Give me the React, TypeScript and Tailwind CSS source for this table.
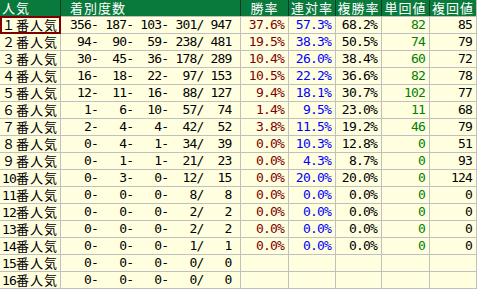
const rows: [number, number, number, number, number, string, string, string, string, string][] = [
  [356, 187, 103, 301, 947, "37.6%", "57.3%", "68.2%", "82", "85"],
  [94, 90, 59, 238, 481, "19.5%", "38.3%", "50.5%", "74", "79"],
  [30, 45, 36, 178, 289, "10.4%", "26.0%", "38.4%", "60", "72"],
  [16, 18, 22, 97, 153, "10.5%", "22.2%", "36.6%", "82", "78"],
  [12, 11, 16, 88, 127, "9.4%", "18.1%", "30.7%", "102", "77"],
  [1, 6, 10, 57, 74, "1.4%", "9.5%", "23.0%", "11", "68"],
  [2, 4, 4, 42, 52, "3.8%", "11.5%", "19.2%", "46", "79"],
  [0, 4, 1, 34, 39, "0.0%", "10.3%", "12.8%", "0", "51"],
  [0, 1, 1, 21, 23, "0.0%", "4.3%", "8.7%", "0", "93"],
  [0, 3, 0, 12, 15, "0.0%", "20.0%", "20.0%", "0", "124"],
  [0, 0, 0, 8, 8, "0.0%", "0.0%", "0.0%", "0", "0"],
  [0, 0, 0, 2, 2, "0.0%", "0.0%", "0.0%", "0", "0"],
  [0, 0, 0, 2, 2, "0.0%", "0.0%", "0.0%", "0", "0"],
  [0, 0, 0, 1, 1, "0.0%", "0.0%", "0.0%", "0", "0"],
  [0, 0, 0, 0, 0, "", "", "", "", ""],
  [0, 0, 0, 0, 0, "", "", "", "", ""],
];

const fullDigits = "０１２３４５６７８９";

const pad = (n: number) => String(n).padStart(3, " ");

const cols = "grid grid-cols-[60px_179px_47px_46px_45px_47px_46px] gap-x-px";
const jp = "font-['Noto_Sans_CJK_JP',sans-serif] text-[13px] tracking-[1px] leading-4 whitespace-nowrap";
const mono =
  "font-['DejaVu_Sans_Mono',monospace] text-[13px] tracking-[-0.8px] leading-4 whitespace-pre";

// 1〜9 are full-width digits, 10 and up half-width, as in the source sheet
const Rank = ({ n }: { n: number }) =>
  n < 10 ? (
    <>{`${fullDigits[n]}番人気`}</>
  ) : (
    <>
      <span className={mono}>{n}</span>番人気
    </>
  );

const App = () => {
  return (
    <div className="w-[478px] h-[289px] bg-white overflow-hidden">
      <div className="w-[477px] flex flex-col gap-y-px bg-[#c0c0c0] pr-px pb-px">
        <div className={`${cols} bg-[#0c3b1f] h-4 ${jp} text-white`}>
          <div className="bg-[#0a7a3c] pl-0.5">人気</div>
          <div className="bg-[#0a7a3c] pl-[9px]">着別度数</div>
          <div className="bg-[#0a7a3c] text-center">勝率</div>
          <div className="bg-[#0a7a3c] text-center">連対率</div>
          <div className="bg-[#0a7a3c] text-center">複勝率</div>
          <div className="bg-[#0a7a3c] text-center">単回値</div>
          <div className="bg-[#0a7a3c] text-center">複回値</div>
        </div>
        <div className={`${cols} gap-y-px auto-rows-[16px]`}>
          {rows.map((r, i) => (
            <div key={i} className="contents">
              <div className={`relative bg-[#ffffe0] pl-0.5 text-black ${jp}`}>
                <Rank n={i + 1} />
                {i === 0 && (
                  <div className="absolute left-0 top-[-1px] right-[-1px] bottom-[-1px] border-2 border-[#800000]" />
                )}
              </div>
              <div className={`bg-[#ffffe0] pl-[9px] text-black ${mono}`}>
                {`${pad(r[0])}- ${pad(r[1])}- ${pad(r[2])}- ${pad(r[3])}/ ${pad(r[4])}`}
              </div>
              <div className={`bg-[#ffffe0] pr-1 text-right text-[#800000] ${mono}`}>{r[5]}</div>
              <div className={`bg-[#ffffe0] pr-1 text-right text-[#0000ff] ${mono}`}>{r[6]}</div>
              <div className={`bg-[#ffffe0] pr-1 text-right text-black ${mono}`}>{r[7]}</div>
              <div className={`bg-[#ffffe0] pr-1 text-right text-[#008000] ${mono}`}>{r[8]}</div>
              <div className={`bg-[#ffffe0] pr-1 text-right text-black ${mono}`}>{r[9]}</div>
            </div>
          ))}
        </div>
      </div>
    </div>
  );
};

export default App;
